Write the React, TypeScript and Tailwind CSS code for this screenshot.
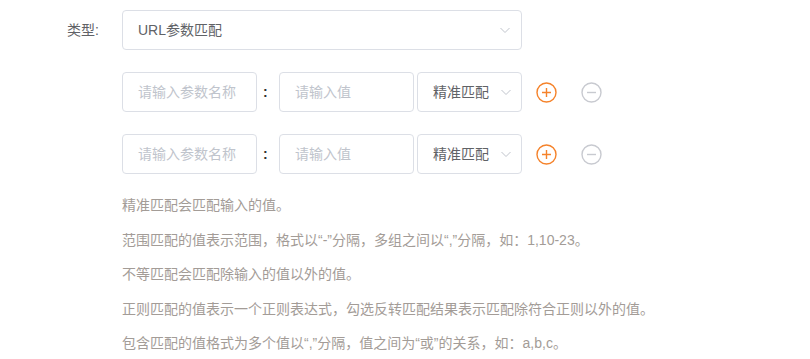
import React from 'react'

const font = { fontFamily: '"Liberation Sans", "Noto Sans CJK SC", sans-serif' }

const Chevron = () => (
  <svg width="12" height="12" viewBox="0 0 12 12" className="text-[#c0c4cc]">
    <path d="M1.5 4 L6 8.5 L10.5 4" fill="none" stroke="currentColor" strokeWidth="1" />
  </svg>
)

const PlusIcon = () => (
  <svg width="21" height="21" viewBox="0 0 21 21">
    <circle cx="10.5" cy="10.5" r="9.5" fill="none" stroke="#f5822a" strokeWidth="1.4" />
    <path d="M6 10.5 H15 M10.5 6 V15" stroke="#f5822a" strokeWidth="1.4" />
  </svg>
)

const MinusIcon = () => (
  <svg width="21" height="21" viewBox="0 0 21 21">
    <circle cx="10.5" cy="10.5" r="9.5" fill="none" stroke="#c8cad0" strokeWidth="1.4" />
    <path d="M6 10.5 H15" stroke="#c8cad0" strokeWidth="1.4" />
  </svg>
)

const ParamRow = () => (
  <div className="flex items-center h-10">
    <div className="w-[135px] h-10 border border-[#dcdfe6] rounded-[4px] flex items-center px-[15px] text-[14px] text-[#c0c4cc]">
      请输入参数名称
    </div>
    <div className="w-[22px] pl-[6px] text-[14px] text-[#303133] font-bold">:</div>
    <div className="w-[135px] h-10 border border-[#dcdfe6] rounded-[4px] flex items-center px-[15px] text-[14px] text-[#c0c4cc]">
      请输入值
    </div>
    <div className="ml-[3px] w-[105px] h-10 border border-[#dcdfe6] rounded-[4px] flex items-center justify-between pl-[15px] pr-[9px] text-[14px] text-[#606266]">
      <span>精准匹配</span>
      <Chevron />
    </div>
    <div className="ml-[14px] flex items-center gap-[24px]">
      <PlusIcon />
      <MinusIcon />
    </div>
  </div>
)

const tips = [
  '精准匹配会匹配输入的值。',
  '范围匹配的值表示范围，格式以“-”分隔，多组之间以“,”分隔，如：1,10-23。',
  '不等匹配会匹配除输入的值以外的值。',
  '正则匹配的值表示一个正则表达式，勾选反转匹配结果表示匹配除符合正则以外的值。',
  '包含匹配的值格式为多个值以“,”分隔，值之间为“或”的关系，如：a,b,c。',
]

export default function App() {
  return (
    <div className="w-[810px] h-[359px] bg-white overflow-hidden pt-[10px]" style={font}>
      <div className="flex items-center h-10">
        <div className="w-[122px] pr-[23px] text-right text-[14px] text-[#606266]">类型:</div>
        <div className="w-[400px] h-10 border border-[#dcdfe6] rounded-[4px] flex items-center justify-between pl-[15px] pr-[10px] text-[14px] text-[#606266]">
          <span>URL参数匹配</span>
          <Chevron />
        </div>
      </div>
      <div className="pl-[122px] mt-[22px] flex flex-col gap-[22px]">
        <ParamRow />
        <ParamRow />
      </div>
      <div className="pl-[122px] mt-[14px] text-[14px] leading-[34.5px] text-[#a39c97]">
        {tips.map((t) => (
          <div key={t}>{t}</div>
        ))}
      </div>
    </div>
  )
}
